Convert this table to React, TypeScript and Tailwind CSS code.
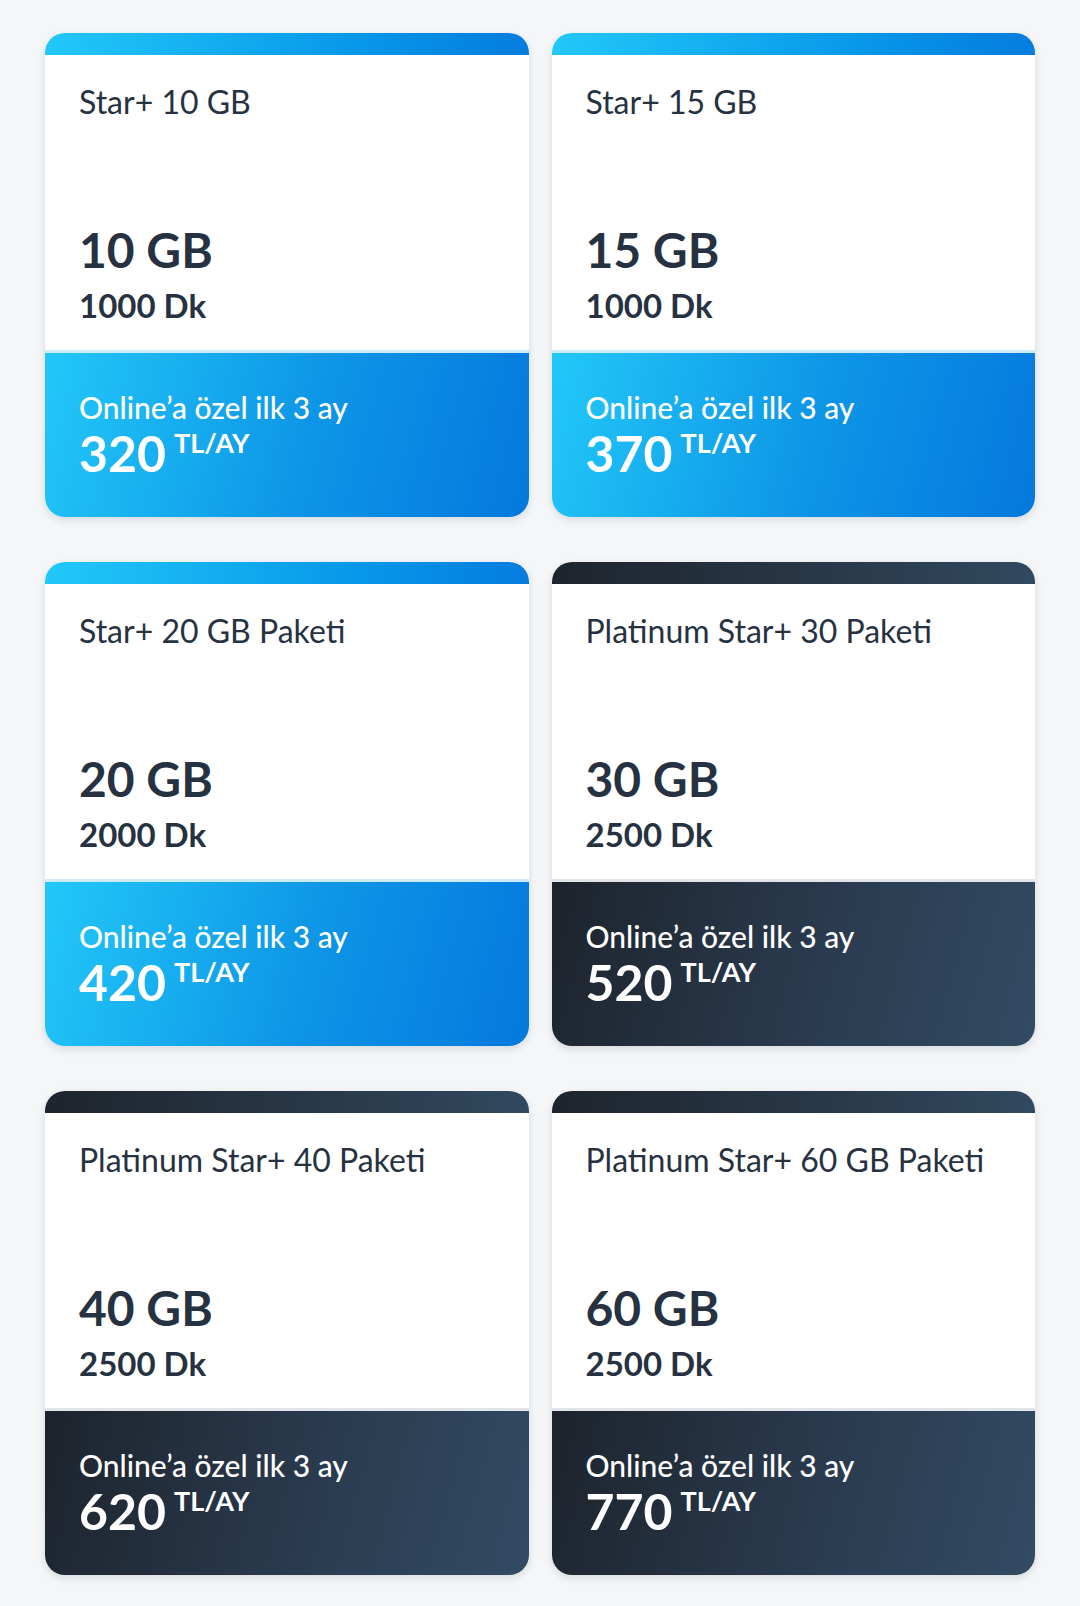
const plans = [
  { name: "Star+ 10 GB", data: "10 GB", minutes: "1000 Dk", price: "320", tone: "blue" },
  { name: "Star+ 15 GB", data: "15 GB", minutes: "1000 Dk", price: "370", tone: "blue" },
  { name: "Star+ 20 GB Paketi", data: "20 GB", minutes: "2000 Dk", price: "420", tone: "blue" },
  { name: "Platinum Star+ 30 Paketi", data: "30 GB", minutes: "2500 Dk", price: "520", tone: "dark" },
  { name: "Platinum Star+ 40 Paketi", data: "40 GB", minutes: "2500 Dk", price: "620", tone: "dark" },
  { name: "Platinum Star+ 60 GB Paketi", data: "60 GB", minutes: "2500 Dk", price: "770", tone: "dark" },
];

function PlanCard({ plan }: { plan: (typeof plans)[number] }) {
  const blue = plan.tone === "blue";
  return (
    <div className="flex h-[484px] flex-col overflow-hidden rounded-[20px] bg-white shadow-[0_3px_8px_rgba(15,30,50,0.12)]">
      <div
        className={`h-[22px] shrink-0 ${
          blue ? "bg-gradient-to-r from-[#22c8f9] to-[#057cdf]" : "bg-gradient-to-r from-[#1e242d] to-[#31495f]"
        }`}
      />
      <div className="flex h-[295px] shrink-0 flex-col justify-between px-[34px] pb-[25px] pt-[27px] text-[#263241]">
        <div className="text-[32px] leading-[40px]">{plan.name}</div>
        <div>
          <div className="text-[48px] font-bold leading-[56px]">{plan.data}</div>
          <div className="mt-[7px] text-[33px] font-bold leading-[40px]">{plan.minutes}</div>
        </div>
      </div>
      <div className={`h-[3px] shrink-0 ${blue ? "bg-[#cdebf8]" : "bg-[#e1e5ea]"}`} />
      <div
        className={`flex flex-1 flex-col justify-center px-[34px] text-white ${
          blue
            ? "bg-[linear-gradient(105deg,#22c8f9_0%,#0d95e6_55%,#0479de_100%)]"
            : "bg-[linear-gradient(105deg,#1d232c_0%,#2a3b4f_55%,#324b63_100%)]"
        }`}
      >
        <div className="text-[30px] font-medium leading-[36px]">Online’a özel ilk 3 ay</div>
        <div className="flex items-start gap-[8px]">
          <span className="text-[50px] font-bold leading-[56px]">{plan.price}</span>
          <span className="mt-[2px] text-[27px] font-bold leading-[32px]">TL/AY</span>
        </div>
      </div>
    </div>
  );
}

export default function App() {
  return (
    <div className="min-h-[1606px] bg-[#f4f6f8] px-[45px] pb-[30px] pt-[33px] font-['Lato','Noto_Sans',sans-serif]">
      <div className="grid grid-cols-2 gap-x-[23px] gap-y-[45px]">
        {plans.map((plan) => (
          <PlanCard key={plan.name} plan={plan} />
        ))}
      </div>
    </div>
  );
}
